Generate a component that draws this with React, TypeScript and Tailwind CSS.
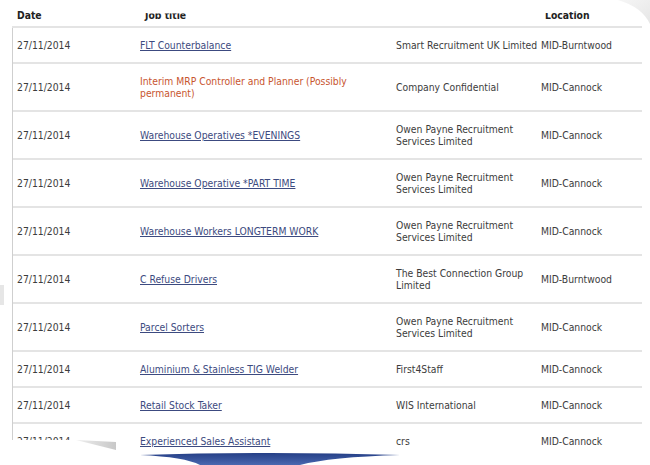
import React from "react";

type Row = {
  date: string;
  title: string;
  company: string;
  location: string;
  highlight?: boolean;
};

const rows: Row[] = [
  { date: "27/11/2014", title: "FLT Counterbalance", company: "Smart Recruitment UK Limited", location: "MID-Burntwood" },
  { date: "27/11/2014", title: "Interim MRP Controller and Planner (Possibly permanent)", company: "Company Confidential", location: "MID-Cannock", highlight: true },
  { date: "27/11/2014", title: "Warehouse Operatives *EVENINGS", company: "Owen Payne Recruitment Services Limited", location: "MID-Cannock" },
  { date: "27/11/2014", title: "Warehouse Operative *PART TIME", company: "Owen Payne Recruitment Services Limited", location: "MID-Cannock" },
  { date: "27/11/2014", title: "Warehouse Workers LONGTERM WORK", company: "Owen Payne Recruitment Services Limited", location: "MID-Cannock" },
  { date: "27/11/2014", title: "C Refuse Drivers", company: "The Best Connection Group Limited", location: "MID-Burntwood" },
  { date: "27/11/2014", title: "Parcel Sorters", company: "Owen Payne Recruitment Services Limited", location: "MID-Cannock" },
  { date: "27/11/2014", title: "Aluminium & Stainless TIG Welder", company: "First4Staff", location: "MID-Cannock" },
  { date: "27/11/2014", title: "Retail Stock Taker", company: "WIS International", location: "MID-Cannock" },
  { date: "27/11/2014", title: "Experienced Sales Assistant", company: "crs", location: "MID-Cannock" },
];

export default function App() {
  return (
    <div
      className="relative w-[650px] h-[465px] overflow-hidden bg-white text-[#3c3c3c] text-[10.3px] leading-[12px]"
      style={{ fontFamily: '"DejaVu Sans Condensed", "DejaVu Sans", Verdana, sans-serif' }}
    >
      <div className="ml-[12px] w-[630px]">
        <div className="grid grid-cols-[124px_256px_148px_102px] h-[28px] items-center border-b-2 border-[#e4e4e4] font-bold text-[#222] pt-[3px]">
          <div className="pl-[5px]">Date</div>
          <div className="pl-[9px]">Job title</div>
          <div></div>
          <div className="pl-[5px]">Location</div>
        </div>
        <div className="border-l border-[#cfcfcf]">
          {rows.map((r, i) => (
            <div
              key={i}
              className="grid grid-cols-[123px_256px_148px_102px] items-center py-[11px] border-b-2 border-[#e4e4e4]"
            >
              <div className="pl-[4px]">{r.date}</div>
              <div className="pl-[4px] pr-[4px]">
                {r.highlight ? (
                  <span className="text-[#c8552f]">{r.title}</span>
                ) : (
                  <a className="text-[#3c4a80] underline underline-offset-[1px]">{r.title}</a>
                )}
              </div>
              <div className="pl-[4px]">{r.company}</div>
              <div className="pl-[1px]">{r.location}</div>
            </div>
          ))}
        </div>
      </div>

      <div className="absolute left-0 top-[285px] w-[4px] h-[20px] bg-[#e6e6e6]" />

      <svg
        className="absolute inset-0 pointer-events-none"
        width="650"
        height="465"
        viewBox="0 0 650 465"
      >
        <defs>
          <linearGradient id="wedge" x1="0" x2="1" y1="0" y2="0">
            <stop offset="0" stopColor="#eeeeee" />
            <stop offset="1" stopColor="#c8c8c8" />
          </linearGradient>
          <linearGradient id="blue" x1="0" x2="0" y1="0" y2="1">
            <stop offset="0" stopColor="#253f86" />
            <stop offset="1" stopColor="#4a68b0" />
          </linearGradient>
          <linearGradient id="curl" x1="0" x2="1" y1="0" y2="1">
            <stop offset="0" stopColor="#f6f6f6" />
            <stop offset="1" stopColor="#e6e6e6" />
          </linearGradient>
        </defs>
        <path d="M112 0 H620 Q600 10 560 13 L150 13.5 Q125 11 112 0 Z" fill="#ffffff" />
        <path d="M618 0 Q642 7 650 24 V0 Z" fill="url(#curl)" />
        <path d="M0 440 H132 L138 451 H650 V465 H0 Z" fill="#ffffff" />
        <path d="M76 440 L116 442 L116 450 Z" fill="url(#wedge)" />
        <path d="M140 455 Q270 451 400 455 Q330 457 300 465 H200 Q185 457 140 455 Z" fill="url(#blue)" />
      </svg>
    </div>
  );
}
